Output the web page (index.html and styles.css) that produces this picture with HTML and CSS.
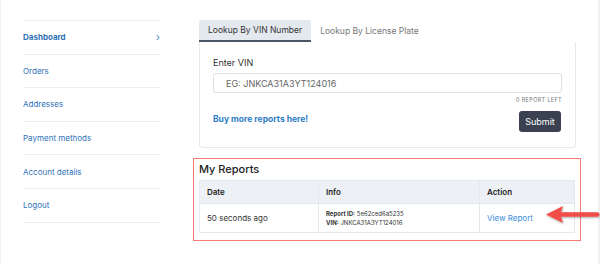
FILE: index.html
```html
<!DOCTYPE html>
<html lang="en">
<head>
  <meta charset="UTF-8">
  <title>My Account - Dashboard</title>
  <link rel="stylesheet" href="styles.css">
</head>
<body>
  <div class="page">
    <nav class="side-nav">
      <a class="nav-item active" href="#">Dashboard <span class="chev">&rsaquo;</span></a>
      <a class="nav-item" href="#">Orders</a>
      <a class="nav-item" href="#">Addresses</a>
      <a class="nav-item" href="#">Payment methods</a>
      <a class="nav-item" href="#">Account details</a>
      <a class="nav-item" href="#">Logout</a>
    </nav>

    <main class="content">
      <div class="tabs">
        <div class="tab active">Lookup By VIN Number</div>
        <div class="tab">Lookup By License Plate</div>
      </div>
      <div class="lookup-card">
        <label class="field-label">Enter VIN</label>
        <input class="vin-input" type="text" placeholder="EG: JNKCA31A3YT124016">
        <div class="left-count">0 REPORT LEFT</div>
        <div class="card-actions">
          <a class="buy-link" href="#">Buy more reports here!</a>
          <button class="submit-btn">Submit</button>
        </div>
      </div>

      <section class="reports">
        <h2>My Reports</h2>
        <table class="report-table">
          <thead>
            <tr><th class="col-date">Date</th><th class="col-info">Info</th><th>Action</th></tr>
          </thead>
          <tbody>
            <tr>
              <td>50 seconds ago</td>
              <td class="info">
                <div><b>Report ID:</b> 5e62ced6a5235</div>
                <div><b>VIN:</b> JNKCA31A3YT124016</div>
              </td>
              <td><a class="view-link" href="#">View Report</a></td>
            </tr>
          </tbody>
        </table>
      </section>
    </main>

    <!-- annotation arrow -->
    <svg class="arrow" width="58" height="24" viewBox="0 0 58 24">
      <defs>
        <filter id="sh" x="-20%" y="-40%" width="140%" height="180%">
          <feDropShadow dx="0.5" dy="1" stdDeviation="0.8" flood-color="#000" flood-opacity="0.35"/>
        </filter>
      </defs>
      <g filter="url(#sh)" fill="#f04e4a">
        <path d="M2 11.5 L19 3 L17 9.2 L53 9.2 Q55.5 9.2 55.5 11.5 Q55.5 13.8 53 13.8 L17 13.8 L19 20 Z"/>
      </g>
    </svg>
  </div>
</body>
</html>
```

FILE: styles.css
```css
body {
  margin: 0;
  font-family: Inter, "Liberation Sans", Arial, sans-serif;
  color: #333;
  background: #fff;
}

.page {
  position: relative;
  width: 600px;
  height: 264px;
  box-sizing: border-box;
  display: flex;
  border-left: 1px solid #eef3f8;
  border-right: 2px solid #eef0f2;
  padding-top: 20px;
}

/* sidebar */
.side-nav {
  margin-left: 22px;
  width: 138px;
  display: flex;
  flex-direction: column;
  border-top: 1px solid #edf0f3;
  align-self: flex-start;
}

.nav-item {
  display: flex;
  justify-content: space-between;
  align-items: center;
  height: 32.6px;
  border-bottom: 1px solid #edf0f3;
  color: #2f72b8;
  text-decoration: none;
  font-size: 8px;
}

.nav-item.active {
  font-weight: 700;
}

.chev {
  font-size: 11px;
  color: #5a8fcc;
  margin-right: 1px;
  font-weight: 400;
}

/* main */
.content {
  margin-left: 38px;
  width: 377px;
}

.tabs {
  display: flex;
}

.tab {
  font-size: 8.5px;
  color: #777;
  padding: 0 9px;
  height: 22px;
  line-height: 22px;
  box-sizing: border-box;
  white-space: nowrap;
}

.tab.active {
  background: #e3e9ef;
  color: #333;
  border-bottom: 2px solid #4c5566;
  line-height: 21px;
  border-radius: 2px 2px 0 0;
}

.lookup-card {
  border: 1px solid #e6e9ed;
  border-top: none;
  border-radius: 0 0 4px 4px;
  padding: 15px 13px 11px 13px;
  height: 106px;
  box-sizing: border-box;
}

.field-label {
  display: block;
  font-size: 9px;
  color: #333;
}

.vin-input {
  display: block;
  margin-top: 5px;
  width: 100%;
  height: 20px;
  box-sizing: border-box;
  border: 1px solid #dcdfe3;
  border-radius: 3px;
  padding: 0 12px;
  font-family: inherit;
  font-size: 9px;
}

.vin-input::placeholder {
  color: #666;
}

.left-count {
  text-align: right;
  font-size: 5.5px;
  color: #777;
  margin-top: 4px;
  letter-spacing: 0.35px;
}

.card-actions {
  display: flex;
  justify-content: space-between;
  align-items: flex-start;
  margin-top: 8px;
}

.buy-link {
  font-size: 8.5px;
  font-weight: 700;
  color: #2d7cc4;
  text-decoration: none;
  margin-top: 3px;
}

.submit-btn {
  background: #3a4252;
  color: #fff;
  border: none;
  border-radius: 3px;
  font-family: inherit;
  font-size: 9px;
  height: 21px;
  width: 42px;
  padding: 0;
  margin-right: 1px;
}

/* reports */
.reports {
  margin: 10px 0 0 -6px;
  width: 388px;
  box-sizing: border-box;
  border: 1.5px solid #f47a76;
  padding: 3px 4px 7px 5px;
}

.reports h2 {
  margin: 0 0 4px 0;
  font-size: 11px;
  font-weight: 500;
  color: #222;
}

.report-table {
  width: 376px;
  border-collapse: collapse;
  font-size: 8px;
}

.report-table th,
.report-table td {
  border: 1px solid #e4e8ec;
  text-align: left;
  padding: 0 7px;
}

.report-table th {
  background: #edf1f5;
  height: 22px;
  font-weight: 600;
  color: #222;
}

.report-table td {
  height: 28px;
  color: #333;
}

.col-date { width: 104px; }
.col-info { width: 146px; }

.report-table td.info {
  font-size: 6px;
  line-height: 9px;
}

.report-table td.info b {
  font-weight: 700;
}

.view-link {
  color: #3b8de0;
  text-decoration: none;
}

.arrow {
  position: absolute;
  left: 543px;
  top: 203px;
}
```
